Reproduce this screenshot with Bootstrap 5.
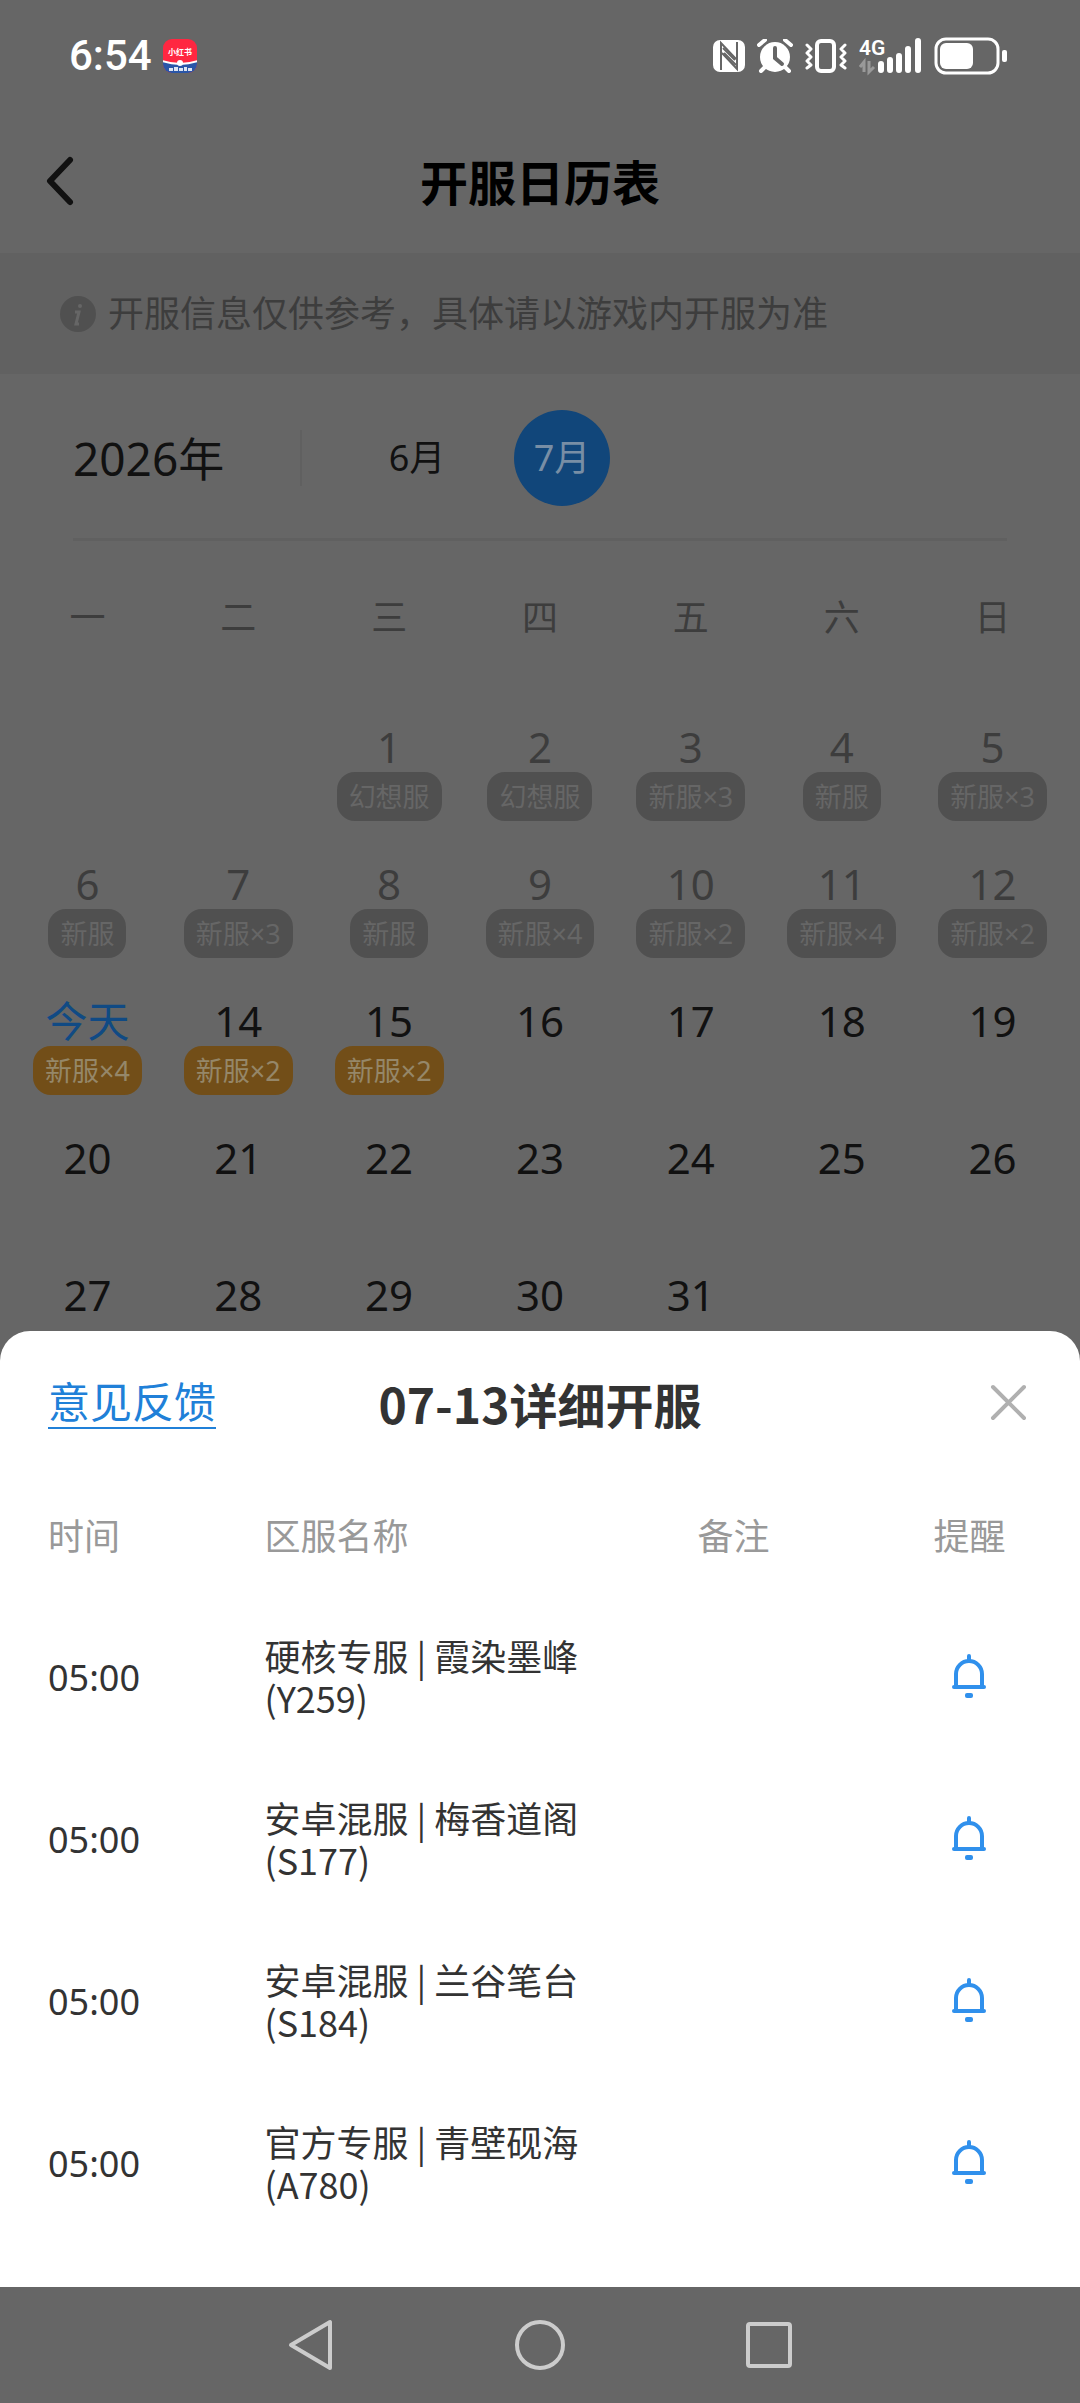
<!DOCTYPE html>
<html lang="zh-CN">
<head>
<meta charset="utf-8">
<meta name="viewport" content="width=device-width, initial-scale=1">
<title>开服日历表</title>
<link href="https://cdn.jsdelivr.net/npm/bootstrap@5.3.0/dist/css/bootstrap.min.css" rel="stylesheet">
<script src="https://cdn.jsdelivr.net/npm/bootstrap@5.3.0/dist/js/bootstrap.bundle.min.js"></script>
<style>
  body { background: #666; color: #111; font-family: "Noto Sans", "Noto Sans CJK SC", sans-serif; font-size: 36px; line-height: 42px; }
  svg { display: block; flex: none; }
  .plain { background: none; border: 0; padding: 0; color: inherit; display: block; }
  .statusbar { height: 112px; padding: 0 73px 0 69px; color: #fff; }
  .clock { font-family: Roboto, sans-serif; font-size: 42px; font-weight: 500; }
  .status-left { gap: 10px; }
  .status-icons { gap: 12px; }
  .topbar { height: 141px; display: grid; grid-template-columns: 120px 1fr 120px; align-items: center; }
  .topbar h1 { font-size: 48px; line-height: 56px; font-weight: 700; color: #000; }
  .notice { background: #616161; height: 121px; color: #3d3d3d; padding: 0 60px; gap: 12px; }
  .months { height: 167px; margin: 0 73px; padding-top: 3px; border-bottom: 3px solid #606060; }
  .year { font-size: 46px; line-height: 56px; width: 229px; border-right: 2px solid #606060; }
  .month-list { padding-left: 67px; gap: 49px; }
  .month-btn { width: 96px; height: 96px; border-radius: 50%; }
  .month-btn.on { background: #11467a; color: #788ea5; }
  .cal { display: grid; grid-template-columns: repeat(7, 1fr); padding: 0 12px; text-align: center; }
  .wk { height: 177px; padding-top: 56px; color: #3d3d3d; }
  .day { height: 137px; padding-top: 4px; display: flex; flex-direction: column; align-items: center; font-size: 42px; line-height: 50px; }
  .day.last { height: 65px; }
  .past { color: #3d3d3d; }
  .today { color: #104a84; }
  .pill { font-size: 27px; line-height: 49px; padding: 0 12px; border-radius: 18px; background: #505050; color: #666; white-space: nowrap; }
  .pill.fresh { background: #724e18; color: #958769; }
  .sheet { background: #fff; color: #333; border-radius: 30px 30px 0 0; padding: 0 48px 42px; }
  .sheet-head { height: 144px; display: grid; grid-template-columns: 1fr auto 1fr; align-items: center; }
  .sheet-head h2 { font-family: "Noto Sans CJK SC", sans-serif; font-size: 48px; line-height: 56px; font-weight: 700; color: #333; }
  .feedback { color: #2080d8; font-size: 42px; line-height: 50px; text-decoration: none; border-bottom: 2px solid #2080d8; justify-self: start; }
  .servers { width: 100%; table-layout: fixed; font-family: "Noto Sans CJK SC", sans-serif; }
  .servers th { font-weight: 400; color: #999; height: 122px; padding: 0 0 4px; }
  .servers td { height: 162px; padding: 0 0 4px; }
  .servers .tm { font-family: "Noto Sans", sans-serif; padding: 0; }
  .c1 { width: 22%; } .c2 { width: 44%; } .c3 { width: 24%; } .c4 { width: 10%; }
  .navkeys { height: 116px; gap: 179px; }
</style>
</head>
<body>
<svg width="0" height="0" class="position-absolute" aria-hidden="true">
  <symbol id="bell" viewBox="0 0 70 48">
    <g fill="none" stroke="#3090ec" stroke-width="4" stroke-linecap="round" stroke-linejoin="round">
      <path d="M35 4v5M22 34V22a13 13 0 0 1 26 0v12"/><path d="M20 35h30"/>
    </g>
    <rect x="31" y="41" width="8" height="5" rx="2" fill="#3090ec"/>
  </symbol>
</svg>
<header>
  <div class="statusbar d-flex align-items-center justify-content-between">
    <div class="status-left d-flex align-items-center">
      <span class="clock">6:54</span>
      <svg width="36" height="36" viewBox="0 0 36 36">
        <defs><clipPath id="app"><rect x="1" y="1" width="34" height="34" rx="9"/></clipPath></defs>
        <g clip-path="url(#app)"><rect width="36" height="36" fill="#ff2741"/><path d="M0 23q18 6 36 0v13H0z" fill="#2a56a8"/><path d="M0 23q18 6 36 0" fill="none" stroke="#fff" stroke-width="2"/><circle cx="18" cy="25" r="3" fill="#fff"/></g>
        <text x="18" y="17" font-size="8" font-weight="700" fill="#fff" text-anchor="middle">小红书</text>
        <path d="M7 30h4v3H7zM12 29h4v4h-4zM17 30h4v3h-4zM22 29h3v4h-3zM26 30h4v3h-4z" fill="#fff" opacity=".85"/>
      </svg>
    </div>
    <div class="status-icons d-flex align-items-center">
      <svg width="32" height="34" viewBox="0 0 32 34"><rect y="1" width="32" height="32" rx="7" fill="#fff"/><path d="M8 31V4l15 16" fill="none" stroke="#666" stroke-width="2"/><path d="M24 3v27L9 14" fill="none" stroke="#666" stroke-width="2"/><path d="M11 14 23 26M10 9l12 12" fill="none" stroke="#666" stroke-width="2"/></svg>
      <svg width="36" height="34" viewBox="0 0 36 34"><circle cx="18" cy="18" r="15" fill="#fff"/><path d="m2 6 6-5M34 6l-6-5M8 28l-4 4M28 28l4 4" stroke="#fff" stroke-width="4" stroke-linecap="round"/><path d="M18 9v10l7 6" fill="none" stroke="#666" stroke-width="4" stroke-linecap="round"/></svg>
      <svg width="42" height="34" viewBox="0 0 42 34"><rect x="12" y="2" width="17" height="30" rx="4" fill="none" stroke="#fff" stroke-width="4"/><path d="m2 6 4 4-4 4 4 4-4 4 4 4-4 3M40 6l-4 4 4 4-4 4 4 4-4 4 4 3" fill="none" stroke="#fff" stroke-width="3" stroke-linecap="round" stroke-linejoin="round"/></svg>
      <svg width="63" height="52" viewBox="0 -8 63 52"><text x="0" y="17" font-size="21" font-weight="600" font-family="Roboto" fill="#fff">4G</text><path d="M5 34V24l-4 5M10 23v11l5-5" fill="none" stroke="#999" stroke-width="3"/><path d="M22 26v6M31 22v10M40 18v14M49 11v21M59 3v29" stroke="#fff" stroke-width="6" stroke-linecap="round"/></svg>
      <svg width="73" height="38" viewBox="0 0 73 38"><rect x="2" y="2" width="62" height="34" rx="10" fill="none" stroke="#fff" stroke-width="3"/><rect x="6" y="6" width="33" height="26" rx="6" fill="#fff"/><rect x="68" y="13" width="5" height="12" rx="2" fill="#fff"/></svg>
    </div>
  </div>
  <div class="topbar">
    <button class="plain" aria-label="返回"><svg width="120" height="60" viewBox="0 0 120 60"><path d="M70 7 50 28l20 21" fill="none" stroke="#111" stroke-width="6" stroke-linecap="round" stroke-linejoin="round"/></svg></button>
    <h1 class="m-0 text-center">开服日历表</h1>
  </div>
</header>
<main>
  <div class="notice d-flex align-items-center">
    <svg width="36" height="36" viewBox="0 0 36 36"><circle cx="18" cy="18" r="18" fill="#505050"/><circle cx="20" cy="10" r="2" fill="#666"/><path d="M15 16h4l-3 12h3" fill="none" stroke="#666" stroke-width="3"/></svg>
    <span>开服信息仅供参考，具体请以游戏内开服为准</span>
  </div>
  <div class="months d-flex align-items-center">
    <div class="year">2026年</div>
    <div class="month-list d-flex">
      <button class="plain month-btn">6月</button>
      <button class="plain month-btn on">7月</button>
    </div>
  </div>
  <div class="cal">
    <div class="wk">一</div><div class="wk">二</div><div class="wk">三</div><div class="wk">四</div><div class="wk">五</div><div class="wk">六</div><div class="wk">日</div>
    <div class="day"></div><div class="day"></div>
    <div class="day past">1<span class="pill">幻想服</span></div>
    <div class="day past">2<span class="pill">幻想服</span></div>
    <div class="day past">3<span class="pill">新服×3</span></div>
    <div class="day past">4<span class="pill">新服</span></div>
    <div class="day past">5<span class="pill">新服×3</span></div>
    <div class="day past">6<span class="pill">新服</span></div>
    <div class="day past">7<span class="pill">新服×3</span></div>
    <div class="day past">8<span class="pill">新服</span></div>
    <div class="day past">9<span class="pill">新服×4</span></div>
    <div class="day past">10<span class="pill">新服×2</span></div>
    <div class="day past">11<span class="pill">新服×4</span></div>
    <div class="day past">12<span class="pill">新服×2</span></div>
    <div class="day today">今天<span class="pill fresh">新服×4</span></div>
    <div class="day">14<span class="pill fresh">新服×2</span></div>
    <div class="day">15<span class="pill fresh">新服×2</span></div>
    <div class="day">16</div><div class="day">17</div><div class="day">18</div><div class="day">19</div>
    <div class="day">20</div><div class="day">21</div><div class="day">22</div><div class="day">23</div><div class="day">24</div><div class="day">25</div><div class="day">26</div>
    <div class="day last">27</div><div class="day last">28</div><div class="day last">29</div><div class="day last">30</div><div class="day last">31</div>
  </div>
</main>
<section class="sheet">
  <div class="sheet-head">
    <a href="#" class="feedback">意见反馈</a>
    <h2 class="m-0">07-13详细开服</h2>
    <button class="plain ms-auto" aria-label="关闭"><svg width="46" height="46" viewBox="0 0 46 46"><path d="m7 7 31 31M38 7 7 38" stroke="#b0b0b0" stroke-width="4" stroke-linecap="round"/></svg></button>
  </div>
  <table class="servers">
    <thead><tr><th class="c1">时间</th><th class="c2">区服名称</th><th class="c3">备注</th><th class="c4">提醒</th></tr></thead>
    <tbody>
      <tr><td class="tm">05:00</td><td>硬核专服 | 霞染墨峰<br>(Y259)</td><td></td><td><button class="plain" aria-label="提醒"><svg width="70" height="48"><use href="#bell"/></svg></button></td></tr>
      <tr><td class="tm">05:00</td><td>安卓混服 | 梅香道阁<br>(S177)</td><td></td><td><button class="plain" aria-label="提醒"><svg width="70" height="48"><use href="#bell"/></svg></button></td></tr>
      <tr><td class="tm">05:00</td><td>安卓混服 | 兰谷笔台<br>(S184)</td><td></td><td><button class="plain" aria-label="提醒"><svg width="70" height="48"><use href="#bell"/></svg></button></td></tr>
      <tr><td class="tm">05:00</td><td>官方专服 | 青壁砚海<br>(A780)</td><td></td><td><button class="plain" aria-label="提醒"><svg width="70" height="48"><use href="#bell"/></svg></button></td></tr>
    </tbody>
  </table>
</section>
<nav class="navkeys d-flex align-items-center justify-content-center">
  <button class="plain" aria-label="返回键"><svg width="48" height="52" viewBox="0 0 48 52"><path d="M43 3v46L4 26z" fill="none" stroke="#ccc" stroke-width="4" stroke-linejoin="round"/></svg></button>
  <button class="plain" aria-label="主页键"><svg width="52" height="52" viewBox="0 0 52 52"><circle cx="26" cy="26" r="23" fill="none" stroke="#ccc" stroke-width="4"/></svg></button>
  <button class="plain" aria-label="任务键"><svg width="48" height="52" viewBox="0 0 48 52"><rect x="3" y="5" width="42" height="42" rx="2" fill="none" stroke="#ccc" stroke-width="4"/></svg></button>
</nav>
</body>
</html>
